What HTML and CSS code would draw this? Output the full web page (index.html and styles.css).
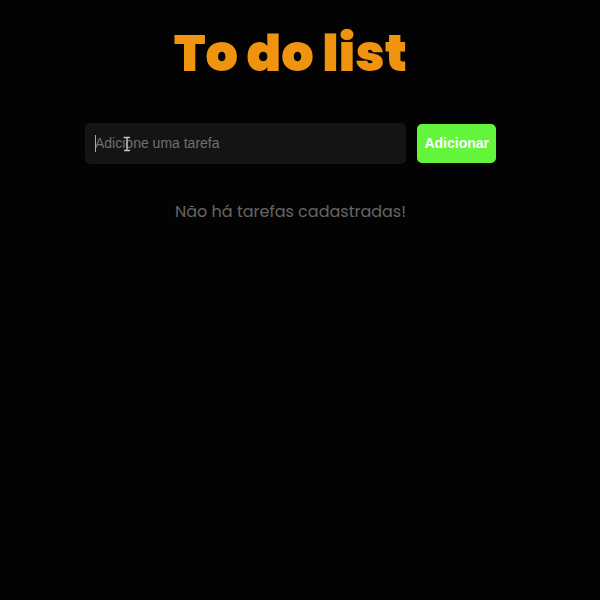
FILE: index.html
```html
<!DOCTYPE html>
<html lang="pt-BR">
<head>
<meta charset="utf-8">
<meta name="viewport" content="width=device-width, initial-scale=1">
<title>To do list</title>
<link rel="stylesheet" href="styles.css">
</head>
<body>
<main class="page">
  <h1 class="title">To do list</h1>
  <form class="task-form">
    <div class="field">
      <input class="task-input" type="text" aria-label="Adicione uma tarefa" placeholder="Adicione uma tarefa">
      <span class="caret"></span>
      <svg class="pointer" width="8" height="16" viewBox="0 0 8 16" aria-hidden="true">
        <path d="M1 1.5H7M4 1.5V14.5M1 14.5H7"/>
      </svg>
    </div>
    <button class="add-button" type="button">Adicionar</button>
  </form>
  <p class="empty">Não há tarefas cadastradas!</p>
</main>
</body>
</html>
```
FILE: styles.css
```css
* {
  box-sizing: border-box;
}

body {
  margin: 0;
  background: #030303;
}

.page {
  display: flex;
  flex-direction: column;
  align-items: center;
  padding: 20px 104px 20px 85px;
}

.title {
  margin: 0;
  color: #f0940f;
  font: 900 51px/66px Poppins, Inter, sans-serif;
  white-space: nowrap;
}

.task-form {
  display: flex;
  align-items: center;
  gap: 11px;
  width: 100%;
  margin-top: 37px;
}

.field {
  position: relative;
  flex: 1;
  min-width: 0;
}

.task-input {
  display: block;
  width: 100%;
  height: 41px;
  padding: 0 10px 2px;
  border: 0;
  border-radius: 5px;
  outline: 0;
  background: #141414;
  color: #ddd;
  font: 14px "Liberation Sans", Arial, sans-serif;
}

.task-input::placeholder {
  color: #707070;
  opacity: 1;
}

.caret {
  position: absolute;
  top: 12px;
  left: 10px;
  width: 1px;
  height: 17px;
  background: #aaa;
}

.pointer {
  position: absolute;
  top: 13px;
  left: 38px;
  fill: none;
  stroke: #c4c4c4;
  stroke-width: 1.4;
}

.add-button {
  height: 39px;
  padding: 0 7px 2px;
  border: 0;
  border-radius: 5px;
  background: #62f53b;
  color: #fff;
  font: bold 14px "Liberation Sans", Arial, sans-serif;
  cursor: pointer;
}

.empty {
  margin: 36px 0 0;
  color: #666;
  font: 16px/24px Poppins, Inter, sans-serif;
  white-space: nowrap;
}
```
